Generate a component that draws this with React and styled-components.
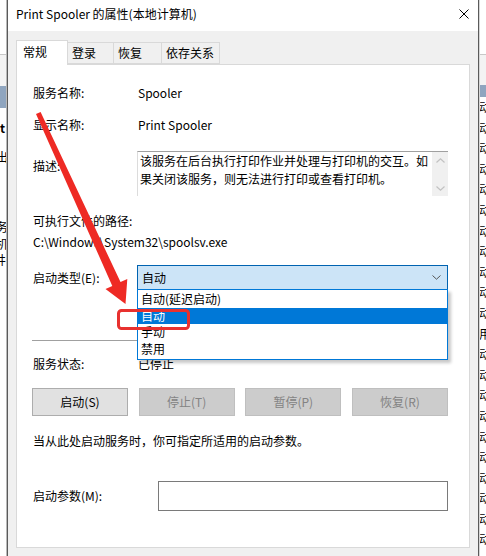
import React from 'react';
import styled, { createGlobalStyle } from 'styled-components';

const GlobalStyle = createGlobalStyle`
  html, body {
    margin: 0;
    padding: 0;
    background: #f0f0f0;
  }
  body {
    font-family: "Noto Sans CJK SC", "Noto Sans", sans-serif;
    font-size: 12px;
    color: #000;
  }
`;

const Screen = styled.div`
  position: relative;
  display: flex;
  width: 486px;
  height: 556px;
  overflow: hidden;
  background: #f0f0f0;
`;

const Backdrop = styled.div`
  display: flex;
  flex-direction: column;
  width: 7px;
  flex-shrink: 0;
  overflow: hidden;
  background: #fff;
  border-left: ${(p) => (p.$right ? '1px solid #d6d6d6' : 'none')};
  border-right: ${(p) => (p.$right ? 'none' : '1px solid #b9b9b9')};
  box-sizing: border-box;
`;

const BackdropTop = styled.div`
  height: 54px;
  border-bottom: 1px solid #c8c8c8;
  flex-shrink: 0;
`;

const BackdropHeader = styled.div`
  height: ${(p) => (p.$tall ? 31 : 30)}px;
  border-bottom: ${(p) => (p.$tall ? 22 : 12)}px solid #8fa5bf;
  flex-shrink: 0;
  background: #f3f3f3;
`;

const BackdropLine = styled.div`
  height: ${(p) => p.$h}px;
  line-height: ${(p) => p.$h}px;
  font-size: 12px;
  white-space: nowrap;
  font-weight: ${(p) => (p.$bold ? 700 : 400)};
  margin-left: ${(p) => p.$shift || 0}px;
  flex-shrink: 0;
`;

const Dialog = styled.div`
  display: flex;
  flex-direction: column;
  width: 472px;
  flex-shrink: 0;
  border-left: 1px solid #5a5a5a;
  border-right: 1px solid #5a5a5a;
  box-sizing: border-box;
  background: #f0f0f0;
`;

const TitleBar = styled.div`
  display: flex;
  align-items: center;
  justify-content: space-between;
  height: 31px;
  padding: 0 9px 1px 8px;
  background: #fff;
  box-sizing: border-box;
  flex-shrink: 0;
`;

const TitleText = styled.span`
  font-size: 12px;
  line-height: 16px;
  margin-top: -3px;
`;

const CloseIcon = styled.svg`
  width: 10px;
  height: 10px;
  margin-top: -3px;
`;

const Body = styled.div`
  flex: 1;
  padding: 9px 8px 8px 8px;
  display: flex;
  flex-direction: column;
`;

const TabRow = styled.div`
  display: flex;
  align-items: flex-end;
  height: 24px;
  position: relative;
  z-index: 1;
`;

const Tab = styled.div`
  height: ${(p) => (p.$active ? 25 : 22)}px;
  margin-bottom: ${(p) => (p.$active ? -1 : 0)}px;
  padding: 0 ${(p) => (p.$active ? 7 : 4)}px ${(p) => (p.$active ? 2 : 0)}px ${(p) => (p.$active ? 6 : 4)}px;
  margin-left: ${(p) => (p.$active ? 0 : -1)}px;
  display: flex;
  align-items: center;
  box-sizing: border-box;
  border: 1px solid #d9d9d9;
  border-bottom: ${(p) => (p.$active ? 'none' : '1px solid #d9d9d9')};
  background: ${(p) => (p.$active ? '#fff' : '#f0f0f0')};
  line-height: 16px;
  &:first-child {
    margin-left: 0;
  }
`;

const TabLabel = styled.span`
  width: ${(p) => p.$w}px;
`;

const Panel = styled.div`
  position: relative;
  flex: 1;
  background: #fff;
  border: 1px solid #d9d9d9;
  padding: 20px 21px 0 15px;
  display: flex;
  flex-direction: column;
`;

const Row = styled.div`
  display: flex;
  align-items: ${(p) => p.$align || 'center'};
  margin-top: ${(p) => p.$mt || 0}px;
  line-height: 16px;
`;

const Label = styled.div`
  width: ${(p) => p.$w || 104}px;
  flex-shrink: 0;
  padding-top: ${(p) => p.$pt || 0}px;
  padding-left: 1px;
`;

const Value = styled.div`
  padding-left: 1px;
`;

const Plain = styled.div`
  margin-top: ${(p) => p.$mt || 0}px;
  line-height: 16px;
  padding-left: ${(p) => p.$pl || 0}px;
`;

const DescBox = styled.div`
  display: flex;
  width: 311px;
  height: 45px;
  box-sizing: border-box;
  border-top: 1px solid #a0a0a0;
  border-left: 1px solid #dcdcdc;
`;

const DescText = styled.div`
  flex: 1;
  padding: 0 0 0 2px;
  line-height: 18px;
`;

const ScrollBar = styled.div`
  width: 16px;
  background: #f0f0f0;
  display: flex;
  flex-direction: column;
  align-items: center;
  justify-content: space-between;
  padding: 6px 0 5px;
  box-sizing: border-box;
`;

const Combo = styled.div`
  position: relative;
  width: 311px;
  height: 25px;
  box-sizing: border-box;
  border: 1px solid #0063b1;
  background: #cce4f7;
  display: flex;
  align-items: center;
  justify-content: space-between;
  padding: 0 6px 0 4px;
`;

const DropList = styled.div`
  position: absolute;
  top: 100%;
  left: -1px;
  width: 311px;
  box-sizing: border-box;
  border: 1px solid #0078d7;
  background: #fff;
  padding: 1px 0 2px;
  box-shadow: 3px 3px 3px rgba(0, 0, 0, 0.22);
  z-index: 2;
`;

const DropItem = styled.div`
  height: 16.5px;
  line-height: 16.5px;
  padding-left: 3px;
  background: ${(p) => (p.$selected ? '#0078d7' : 'transparent')};
  color: ${(p) => (p.$selected ? '#fff' : '#000')};
`;

const Separator = styled.div`
  margin-top: 50px;
  height: 1px;
  background: #a0a0a0;
`;

const ButtonRow = styled.div`
  display: flex;
  justify-content: space-between;
  margin-top: 16px;
`;

const Button = styled.div`
  width: 96px;
  height: 28px;
  box-sizing: border-box;
  display: flex;
  align-items: center;
  justify-content: center;
  border: 1px solid ${(p) => (p.$disabled ? '#bfbfbf' : '#adadad')};
  background: ${(p) => (p.$disabled ? '#cccccc' : '#e1e1e1')};
  color: ${(p) => (p.$disabled ? '#838383' : '#000')};
  line-height: 16px;
`;

const ParamInput = styled.div`
  width: 290px;
  height: 30px;
  box-sizing: border-box;
  border: 1px solid #7a7a7a;
  background: #fff;
`;

const Annotation = styled.svg`
  position: absolute;
  left: 0;
  top: 0;
  width: 486px;
  height: 556px;
  pointer-events: none;
  z-index: 5;
`;

const Chevron = ({ up }) => (
  <svg width="9" height="5" viewBox="0 0 9 5">
    <path
      d={up ? 'M0.5 4.5 L4.5 0.8 L8.5 4.5' : 'M0.5 0.5 L4.5 4.2 L8.5 0.5'}
      fill="none"
      stroke="#c2c2c2"
      strokeWidth="1.2"
    />
  </svg>
);

// bits of the window that sits behind the dialog
const leftFragments = [
  { h: 10, text: '' },
  { h: 20, text: 't', bold: true },
  { h: 38, text: '出', shift: -4 },
  { h: 42, text: '' },
  { h: 17, text: '务', shift: -4 },
  { h: 17, text: '机', shift: -4 },
  { h: 15, text: '井', shift: -6 },
];

function App() {
  const rightRows = Array.from({ length: 22 }, (_, i) => (i === 11 ? '用' : '动'));

  return (
    <Screen>
      <GlobalStyle />
      <Backdrop>
        <BackdropTop />
        <BackdropHeader $tall />
        {leftFragments.map((f, i) => (
          <BackdropLine key={i} $h={f.h} $bold={f.bold} $shift={f.shift}>
            {f.text}
          </BackdropLine>
        ))}
      </Backdrop>

      <Dialog>
        <TitleBar>
          <TitleText>Print Spooler 的属性(本地计算机)</TitleText>
          <CloseIcon viewBox="0 0 10 10">
            <path d="M0.5 0.5 L9.5 9.5 M9.5 0.5 L0.5 9.5" stroke="#000" strokeWidth="1" />
          </CloseIcon>
        </TitleBar>

        <Body>
          <TabRow>
            <Tab $active><TabLabel $w={37}>常规</TabLabel></Tab>
            <Tab><TabLabel $w={37}>登录</TabLabel></Tab>
            <Tab><TabLabel $w={39}>恢复</TabLabel></Tab>
            <Tab><TabLabel $w={49}>依存关系</TabLabel></Tab>
          </TabRow>

          <Panel>
            <Row>
              <Label>服务名称:</Label>
              <Value>Spooler</Value>
            </Row>
            <Row $mt={16}>
              <Label>显示名称:</Label>
              <Value>Print Spooler</Value>
            </Row>
            <Row $mt={18} $align="flex-start">
              <Label $pt={7}>描述:</Label>
              <DescBox>
                <DescText>
                  该服务在后台执行打印作业并处理与打印机的交互。如果关闭该服务，则无法进行打印或查看打印机。
                </DescText>
                <ScrollBar>
                  <Chevron up />
                  <Chevron />
                </ScrollBar>
              </DescBox>
            </Row>
            <Plain $mt={17} $pl={1}>可执行文件的路径:</Plain>
            <Plain $mt={5} $pl={1}>C:\Windows\System32\spoolsv.exe</Plain>
            <Row $mt={15}>
              <Label>启动类型(E):</Label>
              <Combo>
                <span>自动</span>
                <svg width="9" height="5" viewBox="0 0 9 5">
                  <path d="M0.5 0.5 L4.5 4.2 L8.5 0.5" fill="none" stroke="#555" strokeWidth="1" />
                </svg>
                <DropList>
                  <DropItem>自动(延迟启动)</DropItem>
                  <DropItem $selected>自动</DropItem>
                  <DropItem>手动</DropItem>
                  <DropItem>禁用</DropItem>
                </DropList>
              </Combo>
            </Row>
            <Separator />
            <Row $mt={15}>
              <Label>服务状态:</Label>
              <Value>已停止</Value>
            </Row>
            <ButtonRow>
              <Button>启动(S)</Button>
              <Button $disabled>停止(T)</Button>
              <Button $disabled>暂停(P)</Button>
              <Button $disabled>恢复(R)</Button>
            </ButtonRow>
            <Plain $mt={17} $pl={1}>当从此处启动服务时，你可指定所适用的启动参数。</Plain>
            <Row $mt={32}>
              <Label $w={125}>启动参数(M):</Label>
              <ParamInput />
            </Row>
          </Panel>
        </Body>
      </Dialog>

      <Backdrop $right>
        <BackdropTop />
        <BackdropHeader />
        {rightRows.map((c, i) => (
          <BackdropLine key={i} $h={20.6} $shift={-1}>
            {c}
          </BackdropLine>
        ))}
      </Backdrop>

      <Annotation viewBox="0 0 486 556">
        <polygon
          points="40.6,112 120.5,282.1 127.3,279 125.5,304 105.5,289 112.3,285.9 36,114"
          fill="#ee2a24"
        />
        <rect x="118.5" y="310.5" width="70" height="18" rx="3" ry="3" fill="none" stroke="#e8312f" strokeWidth="3" />
      </Annotation>
    </Screen>
  );
}

export default App;
